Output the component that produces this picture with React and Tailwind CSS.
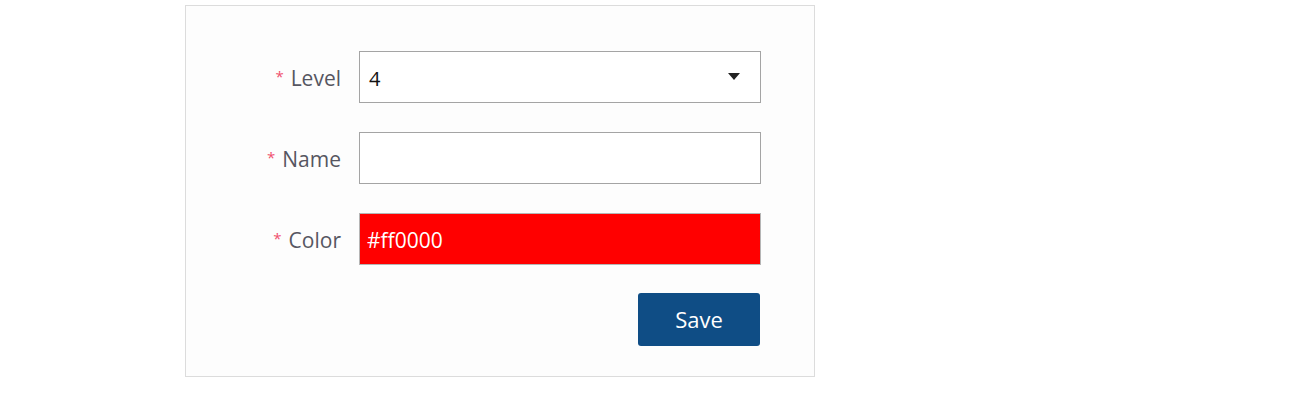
import React, { useState } from 'react';

function Field({ label, children }) {
  return (
    <div className="flex items-center">
      <label className="w-[173px] pr-[18px] pt-[3px] text-right text-[21px] text-[#565661]">
        <span className="text-[#f0506e] mr-[7px] text-[15px] align-[4px]">*</span>
        {label}
      </label>
      {children}
    </div>
  );
}

export default function App() {
  const [name, setName] = useState('');

  return (
    <div className="w-[1310px] h-[400px] bg-white pt-[5px] pl-[185px]" style={{ fontFamily: '"Open Sans", "Noto Sans", sans-serif' }}>
      <div className="w-[630px] h-[372px] border border-[#dcdcdc] bg-[#fdfdfd] pt-[45px] flex flex-col gap-[29px]">
        <Field label="Level">
          <div className="w-[402px] h-[52px] border border-[#a4a4a4] bg-white flex items-center justify-between pl-[9px] pr-[20px] pt-[4px] text-[20px] text-[#111]">
            <span>4</span>
            <svg width="12" height="7" viewBox="0 0 12 7" className="-mt-[6px]">
              <path d="M0 0h12L6 7z" fill="#222" />
            </svg>
          </div>
        </Field>
        <Field label="Name">
          <input
            value={name}
            onChange={(e) => setName(e.target.value)}
            className="w-[402px] h-[52px] border border-[#a4a4a4] bg-white px-[9px] text-[20px] outline-none"
          />
        </Field>
        <Field label="Color">
          <div className="w-[402px] h-[52px] border border-[#b5b5b5] bg-[#ff0000] flex items-center pl-[7px] pt-[4px] text-[21px] text-white">
            #ff0000
          </div>
        </Field>
        <div className="flex pl-[452px] -mt-[1px]">
          <button className="w-[122px] h-[53px] rounded-[3px] bg-[#0f4d85] text-white text-[22px]">
            Save
          </button>
        </div>
      </div>
    </div>
  );
}
